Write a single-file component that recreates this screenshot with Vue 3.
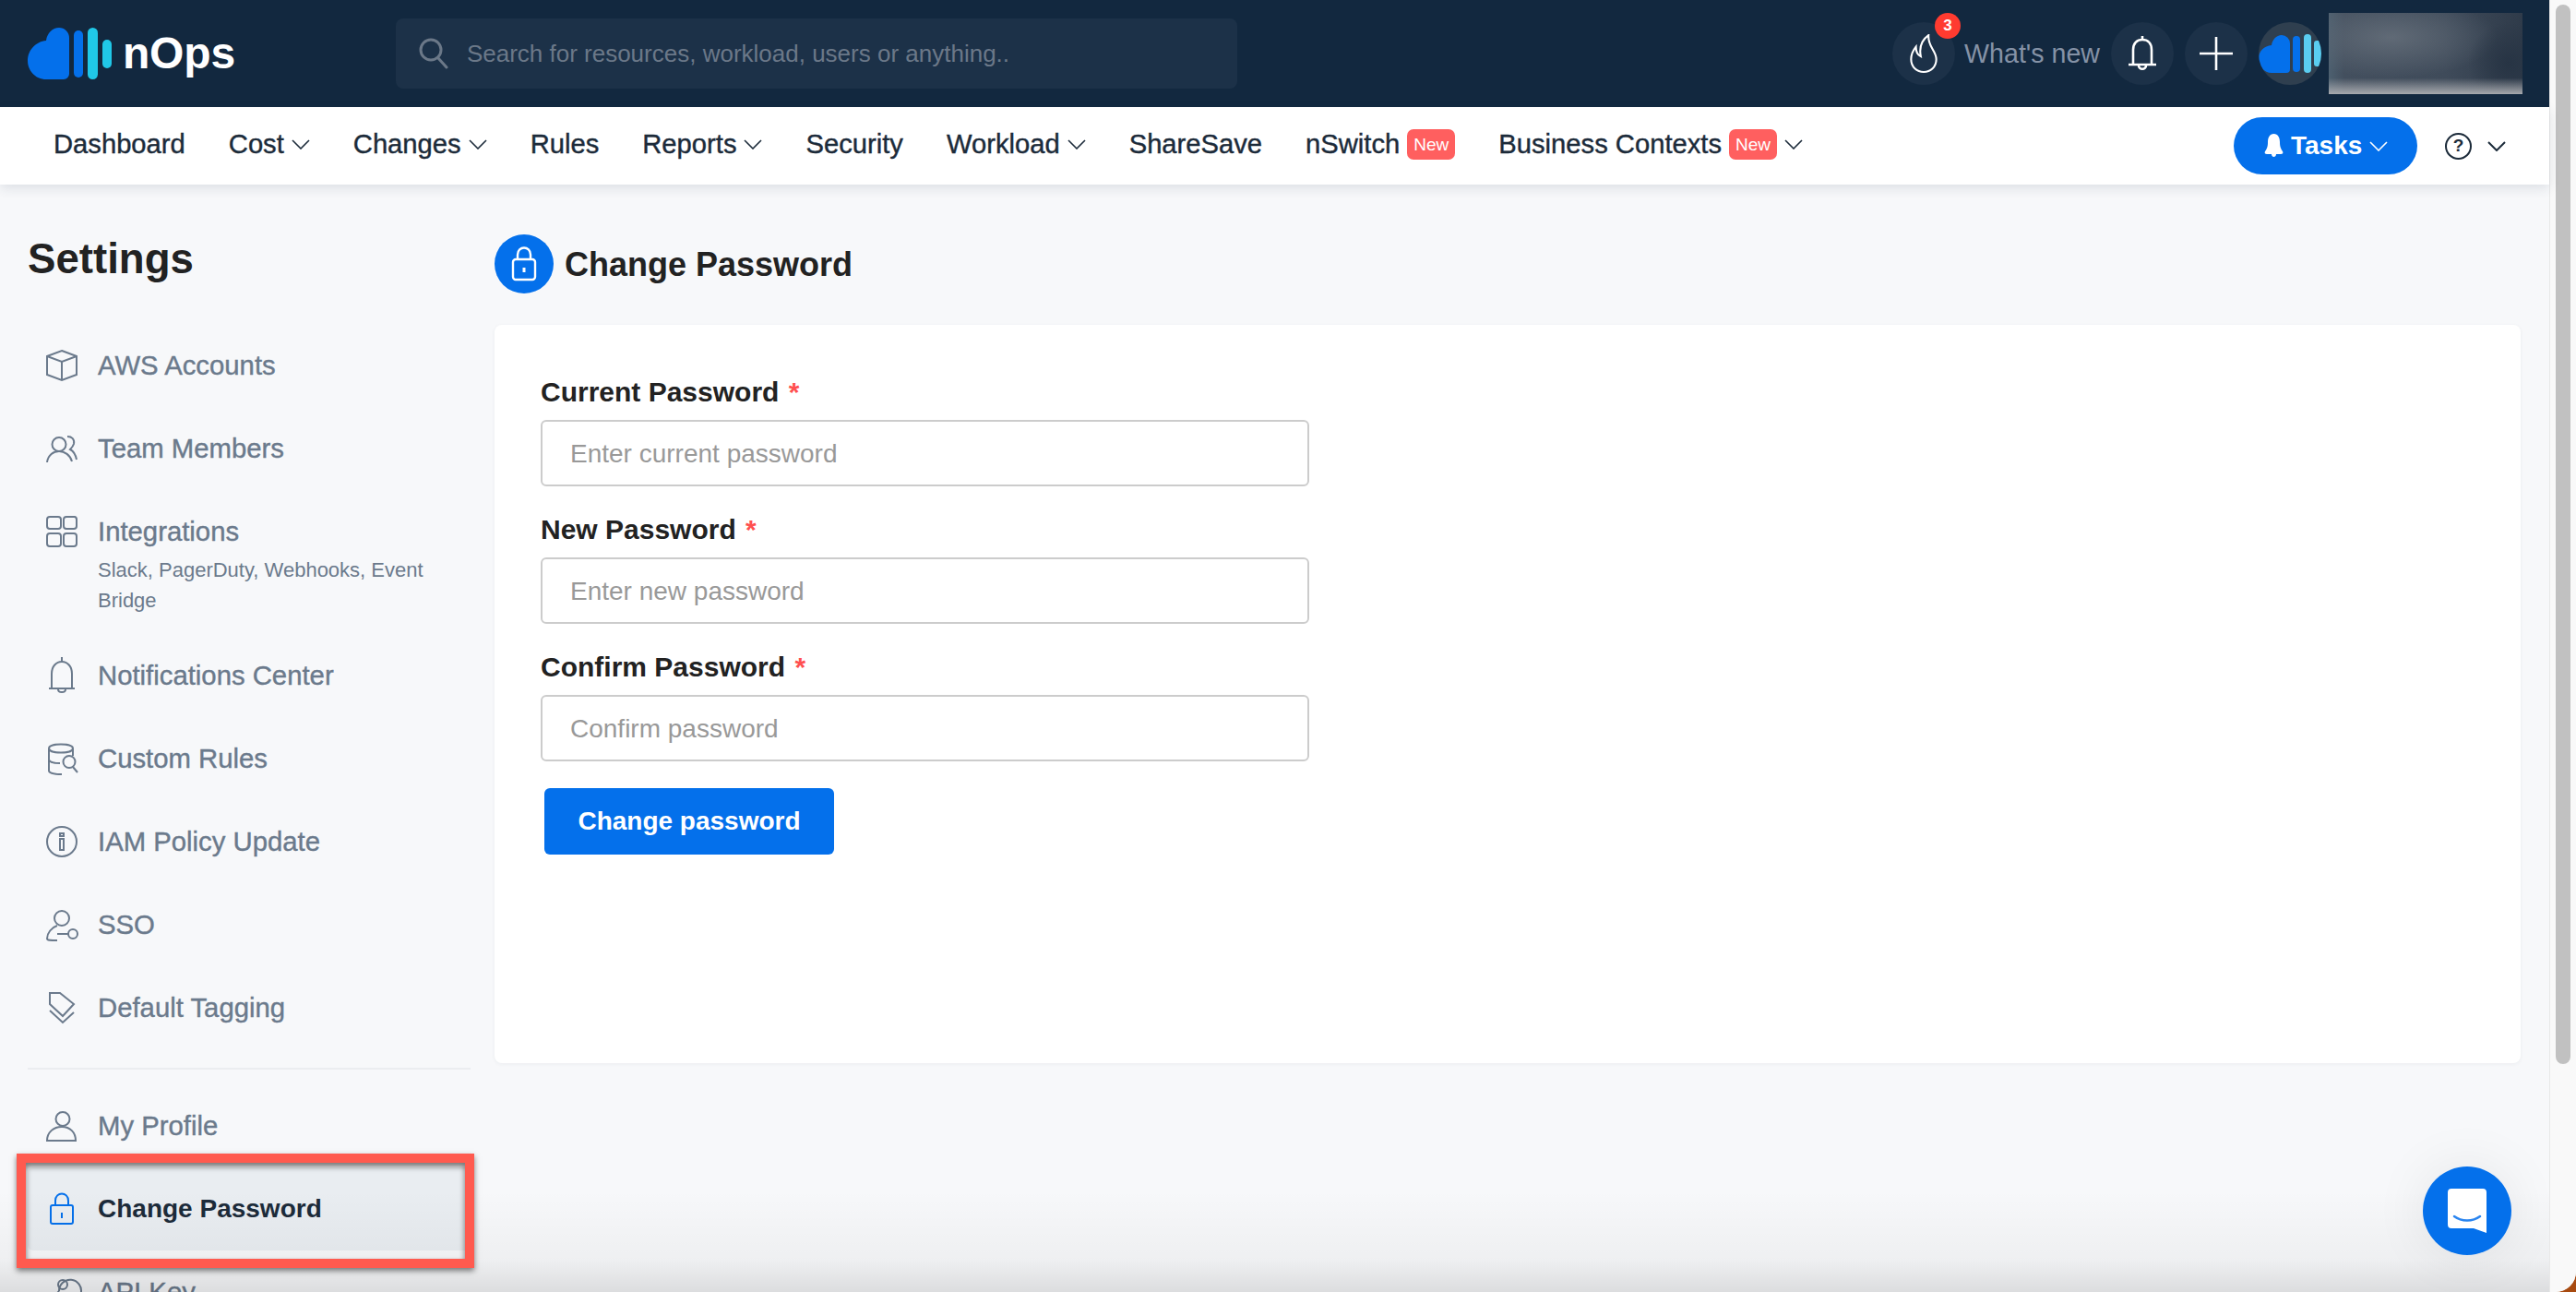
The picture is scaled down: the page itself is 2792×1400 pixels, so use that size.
<template>
  <div class="app">
    <div class="window">
      <header class="topbar">
        <div class="logo">
          <svg width="91" height="56" viewBox="0 0 91 56">
            <path fill="#0470eb" d="M34 0a11 11 0 0 1 11 11v39a6 6 0 0 1-6 6H20C8 56 0 46 0 36 0 24 9 15 20 14 21 6 27 0 34 0z" />
            <rect x="50" y="3" width="10" height="51" rx="5" fill="#0470eb" />
            <rect x="65" y="0" width="11" height="56" rx="5.5" fill="#20c8e8" />
            <rect x="81" y="13" width="10" height="31" rx="5" fill="#20c8e8" />
          </svg>
          <span class="logo-text">nOps</span>
        </div>
        <div class="search">
          <svg width="32" height="34" viewBox="0 0 32 34" fill="none" stroke="#6b7888" stroke-width="3">
            <circle cx="13" cy="13" r="11" />
            <path d="M21 22l9 10" stroke-linecap="round" />
          </svg>
          <input class="search-input" placeholder="Search for resources, workload, users or anything.." />
        </div>
        <div class="top-actions">
          <div class="round">
            <svg width="30" height="42" viewBox="0 0 28 40" fill="none" stroke="#fff" stroke-width="2">
              <path d="M19 1C12 6 9 13 11 23 7 21 6 17 6 13 2 18 1 22 1 26c0 8 6 13 13 13s13-5 13-13C27 17 18 13 19 1z" />
            </svg>
            <span class="count">3</span>
          </div>
          <span class="whats-new">What's new</span>
          <div class="round">
            <svg width="32" height="38" viewBox="0 0 32 38" fill="none" stroke="#fff" stroke-width="2.6">
              <path d="M16 0v4M6 31V15C6 8 10 4 16 4s10 4 10 11v16M1 31h30M12 32c0 5 8 5 8 0" />
            </svg>
          </div>
          <div class="round">
            <svg width="36" height="36" viewBox="0 0 36 36" stroke="#fff" stroke-width="2.6">
              <path d="M18 0v36M0 18h36" />
            </svg>
          </div>
          <div class="round avatar">
            <svg width="68" height="68" viewBox="0 0 68 68">
              <path fill="#0470eb" d="M25 14a9 9 0 0 1 9 9v28a4 4 0 0 1-4 4H14C6 55 0 48 0 40 0 31 6 26 14 25 15 19 19 14 25 14z" />
              <rect x="37" y="15" width="8" height="39" rx="4" fill="#0470eb" />
              <rect x="49" y="13" width="8" height="42" rx="4" fill="#5acdf0" />
              <rect x="60" y="20" width="8" height="28" rx="3" fill="#5acdf0" />
            </svg>
          </div>
          <div class="blurred"></div>
        </div>
      </header>

      <nav class="navbar">
        <div v-for="item in navItems" :key="item.label" class="nav-item">
          <span>{{ item.label }}</span>
          <span v-if="item.isNew" class="new-badge">New</span>
          <svg v-if="item.menu" class="chev" width="20" height="11" viewBox="0 0 20 11" fill="none" stroke="#1c2b3a" stroke-width="1.6">
            <path d="M1 1l9 9 9-9" />
          </svg>
        </div>
        <div class="nav-right">
          <button class="tasks">
            <svg width="21" height="26" viewBox="0 0 21 26" fill="#fff">
              <path d="M10.5 0C6 0 4 4 4 9c0 5-1 7-3 10-1 2 0 3 2 3h5c0 4 5 4 5 0h5c2 0 3-1 2-3-2-3-3-5-3-10 0-5-2-9-6.500-9z" />
            </svg>
            <span>Tasks</span>
            <svg width="20" height="11" viewBox="0 0 20 11" fill="none" stroke="#fff" stroke-width="1.6">
              <path d="M1 1l9 9 9-9" />
            </svg>
          </button>
          <span class="help">?</span>
          <svg width="20" height="11" viewBox="0 0 20 11" fill="none" stroke="#1c2b3a" stroke-width="2">
            <path d="M1 1l9 9 9-9" />
          </svg>
        </div>
      </nav>

      <div class="body">
        <aside class="sidebar">
          <h1 class="side-title">Settings</h1>
          <div class="side-list">
            <div v-for="item in sideTop" :key="item.label" class="side-item" :class="{ 'has-sub': item.sub }">
              <svg class="side-icon" width="34" height="34" viewBox="0 0 34 34" fill="none" stroke="#6b7a8c" stroke-width="2">
                <path v-for="d in item.icon" :key="d" :d="d" />
              </svg>
              <div>
                <div class="side-label">{{ item.label }}</div>
                <div v-if="item.sub" class="side-sub">{{ item.sub }}</div>
              </div>
            </div>
          </div>
          <div class="side-divider"></div>
          <div class="side-list">
            <div v-for="item in sideBottom" :key="item.label" class="side-item" :class="{ active: item.active }">
              <svg class="side-icon" width="34" height="34" viewBox="0 0 34 34" fill="none" :stroke="item.active ? '#0470eb' : '#6b7a8c'" stroke-width="2">
                <path v-for="d in item.icon" :key="d" :d="d" />
              </svg>
              <div class="side-label">{{ item.label }}</div>
            </div>
          </div>
        </aside>

        <main class="content">
          <div class="page-head">
            <div class="page-icon">
              <svg width="28" height="38" viewBox="0 0 28 38" fill="none" stroke="#fff" stroke-width="2.4">
                <rect x="2" y="14" width="24" height="22" rx="3" />
                <path d="M7 14V9C7 -1 21 -1 21 9v5" />
                <path d="M14 23v5" stroke-width="3" />
              </svg>
            </div>
            <h2 class="page-title">Change Password</h2>
          </div>
          <section class="card">
            <div v-for="field in fields" :key="field.label" class="field">
              <label class="field-label">{{ field.label }} <span class="req">*</span></label>
              <input class="field-input" type="password" :placeholder="field.placeholder" />
            </div>
            <button class="submit">Change password</button>
          </section>
        </main>
      </div>

      <div class="bottom-fade"></div>
      <div class="chat">
        <svg width="42" height="48" viewBox="0 0 42 48">
          <path fill="#fff" d="M4 0h34a4 4 0 0 1 4 4v44l-14-5H4a4 4 0 0 1-4-4V4a4 4 0 0 1 4-4z" />
          <path fill="none" stroke="#2a85f0" stroke-width="2.5" stroke-linecap="round" d="M7 30c8 6 20 6 28 0" />
        </svg>
      </div>
    </div>
    <div class="scrollbar">
      <div class="thumb"></div>
    </div>
  </div>
</template>

<script setup>
const navItems = [
  { label: "Dashboard" },
  { label: "Cost", menu: true },
  { label: "Changes", menu: true },
  { label: "Rules" },
  { label: "Reports", menu: true },
  { label: "Security" },
  { label: "Workload", menu: true },
  { label: "ShareSave" },
  { label: "nSwitch", isNew: true },
  { label: "Business Contexts", isNew: true, menu: true },
];

const sideTop = [
  { label: "AWS Accounts", icon: ["M17 1l16 6v20l-16 6-16-6V7z", "M1 7l16 6 16-6", "M17 13v20"] },
  {
    label: "Team Members",
    icon: [
      "M1 32c1-8 7-12 13-12s12 4 14 11",
      "M14 5a7.500 7.500 0 1 1 0 15 7.500 7.500 0 0 1 0-15z",
      "M23 4c5 0 8 3 7 8-1 3-3 5-4 6 4 2 6 6 7 11",
    ],
  },
  {
    label: "Integrations",
    sub: "Slack, PagerDuty, Webhooks, Event Bridge",
    icon: [
      "M4 1h9a3 3 0 0 1 3 3v7a3 3 0 0 1-3 3H4a3 3 0 0 1-3-3V4a3 3 0 0 1 3-3z",
      "M22 1h9a3 3 0 0 1 2 3v7a3 3 0 0 1-3 3h-8a3 3 0 0 1-3-3V4a3 3 0 0 1 3-3z",
      "M4 19h9a3 3 0 0 1 3 3v8a3 3 0 0 1-3 3H4a3 3 0 0 1-3-3v-8a3 3 0 0 1 3-3z",
      "M22 19h8a3 3 0 0 1 3 3v8a3 3 0 0 1-3 3h-8a3 3 0 0 1-3-3v-8a3 3 0 0 1 3-3z",
    ],
  },
  {
    label: "Notifications Center",
    icon: ["M17-3v5", "M6 31V15C6 7 11 2 17 2s11 5 11 13v16", "M3 31h28", "M13 32c0 4 8 4 8 0"],
  },
  {
    label: "Custom Rules",
    icon: [
      "M3 6c0-6 26-6 26 0s-26 6-26 0z",
      "M3 6v24c0 3 8 4 14 4",
      "M29 6v8",
      "M3 18c0 3 7 4 12 4",
      "M25 14a6.500 6.500 0 1 1 0 13 6.500 6.500 0 0 1 0-13z",
      "M29 26l5 6",
    ],
  },
  {
    label: "IAM Policy Update",
    icon: ["M17 1a16 16 0 1 1 0 32 16 16 0 0 1 0-32z", "M15 8h4v3h-4z", "M15 14h4v12h-4z"],
  },
  {
    label: "SSO",
    icon: [
      "M17 2a8 8 0 1 1 0 16 8 8 0 0 1 0-16z",
      "M12 18C6 20 1 26 1 32c0 2 3 2 11 2",
      "M29 22a5 5 0 1 1 0 10 5 5 0 0 1 0-10z",
      "M24 27H12",
    ],
  },
  {
    label: "Default Tagging",
    icon: ["M4 1h11l15 12-12 13L4 13z", "M4 20l14 13 12-11"],
  },
];

const sideBottom = [
  {
    label: "My Profile",
    icon: ["M18 2a7.500 7.500 0 1 1 0 15 7.500 7.500 0 0 1 0-15z", "M1 33c0-9 7-15 16-15s15 6 15 15z"],
  },
  {
    label: "Change Password",
    active: true,
    icon: ["M7 13h20a2 2 0 0 1 2 2v16a2 2 0 0 1-2 2H7a2 2 0 0 1-2-2V15a2 2 0 0 1 2-2z", "M10 13V8c0-10 14-10 14 0v5", "M17 21v6"],
  },
  {
    label: "API Key",
    icon: ["M14 16a12 12 0 1 1 8 11", "M18 4a5 5 0 1 1 0 10 5 5 0 0 1 0-10z", "M14 16L5 26v7"],
  },
];

const fields = [
  { label: "Current Password", placeholder: "Enter current password" },
  { label: "New Password", placeholder: "Enter new password" },
  { label: "Confirm Password", placeholder: "Confirm password" },
];
</script>

<style scoped>
.app {
  display: flex;
  width: 2792px;
  height: 1400px;
  overflow: hidden;
  border-bottom-right-radius: 22px;
  background: #f7f8fa;
  font-family: "Liberation Sans", Arial, sans-serif;
}

.window {
  position: relative;
  flex: 1;
  min-width: 0;
  display: flex;
  flex-direction: column;
}

.topbar {
  display: flex;
  align-items: center;
  flex: none;
  height: 116px;
  padding: 0 29px 0 30px;
  box-sizing: border-box;
  background: #12283f;
}

.logo {
  display: flex;
  align-items: center;
  gap: 12px;
}

.logo-text {
  margin-bottom: 2px;
  color: #fff;
  font-size: 48px;
  font-weight: 700;
  letter-spacing: -0.2px;
}

.search {
  display: flex;
  align-items: center;
  gap: 18px;
  width: 912px;
  height: 76px;
  margin-left: 174px;
  padding-left: 25px;
  box-sizing: border-box;
  border-radius: 8px;
  background: #1c3148;
}

.search-input {
  flex: 1;
  border: none;
  outline: none;
  background: transparent;
  font-family: inherit;
  font-size: 26px;
}

.search-input::placeholder {
  color: #6b7888;
  opacity: 1;
}

.top-actions {
  display: flex;
  align-items: center;
  gap: 12px;
  margin-left: auto;
}

.round {
  position: relative;
  display: flex;
  align-items: center;
  justify-content: center;
  width: 68px;
  height: 68px;
  border-radius: 50%;
  background: #1c3148;
}

.round.avatar {
  background: #2f3f4f;
  overflow: hidden;
}

.count {
  position: absolute;
  top: -10px;
  right: -6px;
  width: 28px;
  height: 28px;
  border-radius: 50%;
  background: #ff3b30;
  color: #fff;
  font-size: 17px;
  font-weight: 700;
  line-height: 28px;
  text-align: center;
}

.whats-new {
  margin-left: -2px;
  color: #8592a6;
  font-size: 28.6px;
}

.blurred {
  width: 210px;
  height: 88px;
  margin-left: -4px;
  background:
    linear-gradient(0deg, rgba(172, 174, 178, 0.95) 0, rgba(172, 174, 178, 0) 20%),
    radial-gradient(circle at 93% 62%, #273444 0, rgba(39, 52, 68, 0) 22%),
    radial-gradient(ellipse 55% 50% at 32% 30%, #606a76 0, rgba(96, 106, 118, 0) 100%),
    linear-gradient(90deg, #4d6070 0, #434f5e 8%, #3f4b5a 60%, #2f3b4a 100%);
}

.navbar {
  position: relative;
  z-index: 2;
  display: flex;
  align-items: center;
  gap: 47px;
  flex: none;
  height: 84px;
  padding: 0 47px 0 58px;
  box-sizing: border-box;
  background: #fff;
  box-shadow: 0 4px 12px rgba(30, 50, 70, 0.12);
}

.nav-item {
  display: flex;
  align-items: center;
  gap: 8px;
  margin-bottom: 4px;
  color: #1c2b3a;
  font-size: 29.2px;
  -webkit-text-stroke: 0.4px currentColor;
}

.new-badge {
  width: 52px;
  height: 33px;
  border-radius: 7px;
  background: #ff5f5f;
  color: #fff;
  font-size: 19px;
  line-height: 33px;
  text-align: center;
  -webkit-text-stroke: 0;
}

.nav-right {
  display: flex;
  align-items: center;
  margin-left: auto;
}

.tasks {
  display: flex;
  align-items: center;
  gap: 8px;
  width: 199px;
  height: 62px;
  padding: 0 0 0 33px;
  box-sizing: border-box;
  border: none;
  border-radius: 31px;
  background: #0470eb;
  color: #fff;
  font-family: inherit;
  font-size: 28px;
  font-weight: 700;
}

.help {
  width: 29px;
  height: 29px;
  margin: 0 17px 0 30px;
  box-sizing: border-box;
  border: 2.4px solid #1c2b3a;
  border-radius: 50%;
  color: #1c2b3a;
  font-size: 19px;
  font-weight: 700;
  line-height: 24px;
  text-align: center;
}

.body {
  display: flex;
  flex: 1;
  min-height: 0;
}

.sidebar {
  flex: none;
  width: 536px;
  padding: 51px 26px 0 30px;
  box-sizing: border-box;
}

.side-title {
  margin: 0 0 40px;
  color: #222;
  font-size: 45.6px;
  font-weight: 700;
  line-height: 60px;
}

.side-item {
  position: relative;
  display: flex;
  gap: 22px;
  padding: 30px 20px;
  border-radius: 6px;
}

.side-item.has-sub {
  padding-bottom: 20px;
}

.side-item.active {
  background: #e9edf1;
}

.side-item.active::after {
  content: "";
  position: absolute;
  z-index: 5;
  top: -15px;
  left: -12px;
  right: -4px;
  bottom: -19px;
  border: 10px solid #ff5a4f;
  box-shadow: 0 3px 6px rgba(0, 0, 0, 0.5), inset 0 4px 6px rgba(0, 0, 0, 0.55);
}

.side-icon {
  flex: none;
  margin: -2px 0;
  overflow: visible;
}

.side-label {
  color: #6b7a8c;
  font-size: 29.3px;
  line-height: 30px;
  -webkit-text-stroke: 0.4px currentColor;
}

.active .side-label {
  color: #1c2b3a;
  font-size: 28px;
  font-weight: 700;
  -webkit-text-stroke: 0;
}

.side-sub {
  margin-top: 10px;
  color: #6b7a8c;
  font-size: 22px;
  line-height: 33px;
}

.side-divider {
  height: 2px;
  margin: 20px 0 16px;
  background: #ebedf0;
}

.content {
  flex: 1;
  min-width: 0;
  padding: 54px 31px 0 0;
}

.page-head {
  display: flex;
  align-items: center;
  gap: 12px;
  margin-bottom: 34px;
}

.page-icon {
  display: flex;
  align-items: center;
  justify-content: center;
  width: 64px;
  height: 64px;
  border-radius: 50%;
  background: #0470eb;
}

.page-title {
  margin: 2px 0 0;
  color: #222;
  font-size: 36px;
  font-weight: 700;
}

.card {
  height: 800px;
  padding: 55px 50px 0;
  box-sizing: border-box;
  border-radius: 8px;
  background: #fff;
  box-shadow: 0 1px 4px rgba(30, 50, 70, 0.06);
}

.field {
  margin-bottom: 29px;
}

.field-label {
  display: block;
  margin-bottom: 12px;
  color: #222;
  font-size: 30px;
  font-weight: 700;
  line-height: 36px;
}

.req {
  margin-left: 2px;
  color: #ff5050;
}

.field-input {
  display: block;
  width: 833px;
  height: 72px;
  padding: 1px 30px 0;
  box-sizing: border-box;
  border: 2px solid #ccc;
  border-radius: 6px;
  outline: none;
  font-family: inherit;
  font-size: 28px;
}

.field-input::placeholder {
  color: #999;
  opacity: 1;
}

.submit {
  display: block;
  width: 314px;
  height: 72px;
  margin: 0 0 0 4px;
  border: none;
  border-radius: 6px;
  background: #0470eb;
  color: #fff;
  font-family: inherit;
  font-size: 28px;
  font-weight: 700;
}

.bottom-fade {
  position: absolute;
  z-index: 3;
  left: 0;
  right: 0;
  bottom: 0;
  height: 110px;
  pointer-events: none;
  background: linear-gradient(to top, rgba(0, 0, 0, 0.11), rgba(0, 0, 0, 0.035) 35px, rgba(0, 0, 0, 0));
}

.chat {
  position: absolute;
  z-index: 4;
  right: 41px;
  bottom: 40px;
  display: flex;
  align-items: center;
  justify-content: center;
  width: 96px;
  height: 96px;
  border-radius: 50%;
  background: #0470eb;
  box-shadow: 0 0 60px rgba(0, 0, 0, 0.08);
}

.scrollbar {
  flex: none;
  width: 29px;
  padding: 5px 6px 0 6px;
  box-sizing: border-box;
  border-left: 1px solid #e8e8e8;
  background: #f9f9f9;
}

.thumb {
  width: 16px;
  height: 1148px;
  border-radius: 8px;
  background: #c1c1c1;
}
</style>

<style>
html,
body {
  margin: 0;
  overflow: hidden;
  background: #a84a10;
}
</style>
